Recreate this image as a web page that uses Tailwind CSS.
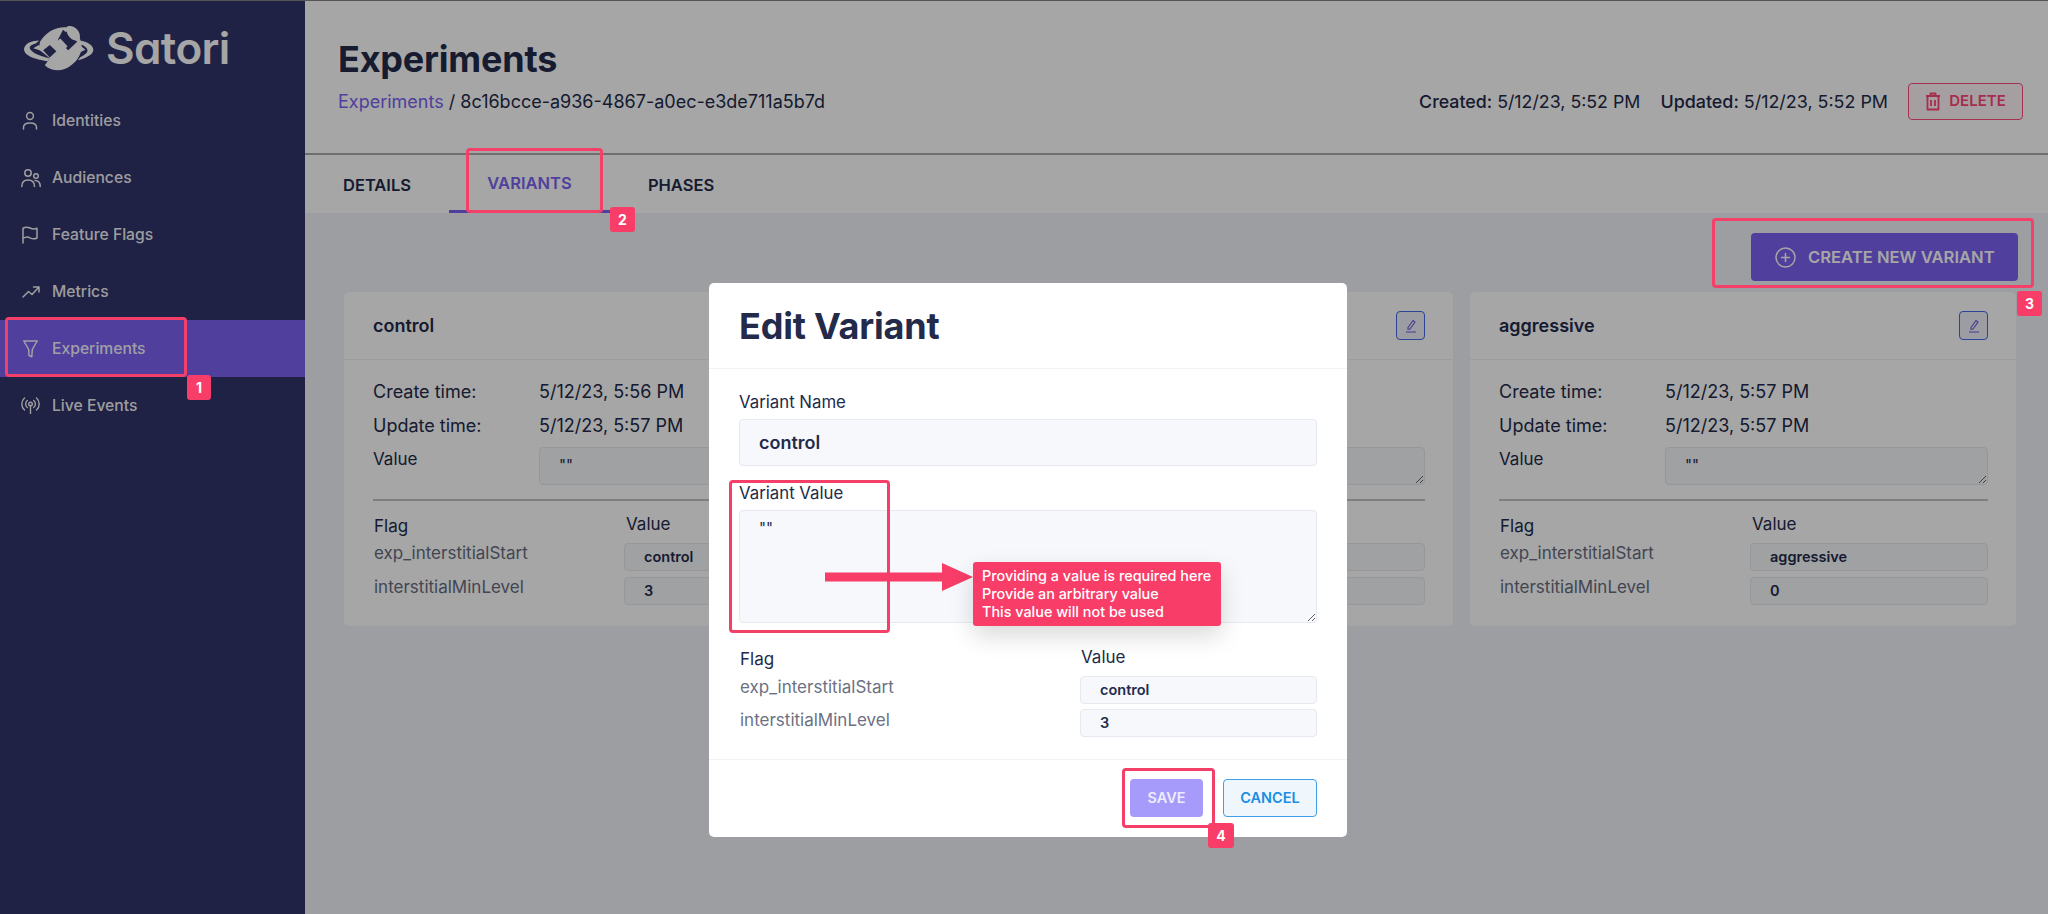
<!DOCTYPE html>
<html>
<head>
<meta charset="utf-8">
<script src="https://cdn.jsdelivr.net/npm/@tailwindcss/browser@4"></script>
</head>
<body class="m-0 font-['Inter',sans-serif]">
<div class="relative w-[2048px] h-[914px] overflow-hidden border-t border-[#555] flex text-[#232a4a]">

  <!-- Sidebar -->
  <aside class="w-[305px] shrink-0 bg-[#30336a] text-white">
    <div class="h-[91px] pl-[24px] pt-[24px] flex items-start gap-[12px]">
      <svg class="w-[70px] h-[46px]" viewBox="72 76 212 138" fill="#fff">
        <path d="M120 127C138 96 168 80 200 82 214 70 246 88 241 116 256 148 238 182 215 197 190 218 155 216 135 197L150 176 118 150Z"/>
        <path fill="#30336a" d="M130 152 150 136 170 155 150 174Z"/>
        <path fill="#30336a" d="M190 90 233 126 206 152 174 122Z"/>
        <path d="M176 118C190 108 200 100 204 90L222 106C216 120 206 132 192 142Z" fill="#30336a"/>
        <path d="M162 132 182 116 204 140 184 162 170 148Z"/>
        <ellipse cx="220" cy="101" rx="15" ry="24" transform="rotate(-38 220 101)"/>
        <path d="M72 148C75 130 95 122 118 122L108 131C92 135 85 142 92 150 100 160 120 170 150 176L143 185C110 180 72 170 72 148Z"/>
        <path d="M100 146 118 135 124 153Z"/>
        <path d="M240 122C265 125 282 138 282 150 282 165 260 175 235 182L243 172C258 165 266 157 264 150 262 142 250 135 235 132Z"/>
        <path d="M240 135 258 150 235 162Z"/>
      </svg>
      <span class="text-[44px] leading-[46px] font-semibold tracking-[-0.6px] [font-feature-settings:'cv11']">Satori</span>
    </div>
    <nav class="text-[15.700px] font-medium text-white/95">
      <a class="h-[57px] flex items-center pl-[22px] gap-[14px]">
        <svg class="w-[16px] h-[20px]" viewBox="0 0 16 20" fill="none" stroke="currentColor" stroke-width="1.5" stroke-linecap="round"><circle cx="8" cy="5" r="3.4"/><path d="M1.5 18v-1.5C1.5 13.5 4 12 8 12s6.500 1.500 6.500 4.500V18"/></svg>
        <span>Identities</span>
      </a>
      <a class="h-[57px] flex items-center pl-[21px] gap-[11px]">
        <svg class="w-[20px] h-[20px]" viewBox="0 0 20 20" fill="none" stroke="currentColor" stroke-width="1.5" stroke-linecap="round"><circle cx="7" cy="5" r="3.200"/><circle cx="15" cy="8" r="2.300"/><path d="M.8 18.500C.8 14.500 3 12 7 12s6.500 2.500 6.500 6.500M14 12.500c3 0 5.200 2 5.200 6"/></svg>
        <span>Audiences</span>
      </a>
      <a class="h-[57px] flex items-center pl-[22px] gap-[14px]">
        <svg class="w-[16px] h-[18px]" viewBox="0 0 16 18" fill="none" stroke="currentColor" stroke-width="1.5" stroke-linecap="round" stroke-linejoin="round"><path d="M1 17V2.200C4 .5 6 1 8 2s4.500 1.500 7 .3V12c-2.500 1.200-5 .8-7-.2S3.500 10.800 1 12.500"/></svg>
        <span>Feature Flags</span>
      </a>
      <a class="h-[57px] flex items-center pl-[22px] gap-[12px]">
        <svg class="w-[18px] h-[12px]" viewBox="0 0 18 12" fill="none" stroke="currentColor" stroke-width="1.5" stroke-linecap="round" stroke-linejoin="round"><path d="M1 11 6.500 5.500 10 8.500 16.500 1.500M11.500 1H17v5"/></svg>
        <span>Metrics</span>
      </a>
      <a class="h-[57px] flex items-center pl-[23px] gap-[14px] bg-[#7b62f0]">
        <svg class="w-[15px] h-[18px]" viewBox="0 0 15 18" fill="none" stroke="currentColor" stroke-width="1.500" stroke-linejoin="round"><path d="M.8 1h13.400L9.300 9.500 8.800 16.800 6 15.500 5.700 9.500Z"/></svg>
        <span>Experiments</span>
      </a>
      <a class="h-[57px] flex items-center pl-[20px] gap-[11px]">
        <svg class="w-[21px] h-[17px]" viewBox="0 0 21 17" fill="none" stroke="currentColor" stroke-width="1.400" stroke-linecap="round"><circle cx="10.500" cy="7" r="1.800"/><path d="M10.500 9v7.500M7.300 10.500a4.500 4.500 0 0 1 0-7M13.700 3.500a4.500 4.500 0 0 1 0 7M4.500 13a8 8 0 0 1 0-12M16.500 1a8 8 0 0 1 0 12"/></svg>
        <span>Live Events</span>
      </a>
    </nav>
  </aside>

  <!-- Main -->
  <main class="flex-1 flex flex-col bg-[#f1f3f7]">
    <header class="h-[154px] shrink-0 bg-white border-b-2 border-[#aaa] flex justify-between pl-[33px] pr-[25px]">
      <div class="pt-[36px]">
        <h1 class="text-[36px] leading-[44px] font-bold tracking-[-0.2px]">Experiments</h1>
        <p class="mt-[9px] text-[18px] leading-[24px]"><span class="text-[#7b62f0]">Experiments</span> / 8c16bcce-a936-4867-a0ec-e3de711a5b7d</p>
      </div>
      <div class="pt-[82px] flex items-start">
        <span class="text-[17.8px] leading-[37px]"><span class="font-medium">Created:</span> 5/12/23, 5:52 PM</span>
        <span class="ml-[20px] text-[17.9px] leading-[37px]"><span class="font-medium">Updated:</span> 5/12/23, 5:52 PM</span>
        <button class="ml-[20px] w-[115px] h-[37px] rounded-[4px] border border-[#fb4f7c] bg-[#fff5f8] text-[#ff4677] text-[15px] font-semibold flex items-center justify-center gap-[8px]">
          <svg class="w-[16px] h-[19px]" viewBox="0 0 16 19" fill="none" stroke="currentColor" stroke-width="1.800" stroke-linejoin="round"><path d="M1 4h14M5.500 4V1.500h5V4M2.500 4v13.500h11V4M6 8v6M10 8v6"/></svg>
          DELETE
        </button>
      </div>
    </header>
    <div class="h-[58px] shrink-0 bg-white flex text-[16.500px] font-semibold">
      <a class="w-[144px] pt-[2px] flex items-center justify-center">DETAILS</a>
      <a class="w-[161px] pt-[2px] flex items-center justify-center text-[#7b62f0] border-b-[3px] border-[#7b62f0]">VARIANTS</a>
      <a class="w-[142px] pt-[2px] flex items-center justify-center">PHASES</a>
    </div>
    <section class="flex-1 pl-[39px] pr-[30px] pt-[20px]">
      <div class="flex justify-end">
        <button class="w-[267px] h-[48px] rounded-[4px] bg-[#7b62f0] text-white text-[16.600px] font-semibold flex items-center pl-[24px] gap-[12px]">
          <svg class="w-[21px] h-[21px]" viewBox="0 0 21 21" fill="none" stroke="currentColor" stroke-width="1.500" stroke-linecap="round"><circle cx="10.500" cy="10.500" r="9.500"/><path d="M10.500 6.500v8M6.500 10.500h8"/></svg>
          CREATE NEW VARIANT
        </button>
      </div>
      <div class="mt-[11px] grid grid-cols-[546px_546px_546px] gap-[17px]">

        <article class="h-[334px] bg-white rounded-[5px]">
          <div class="h-[68px] border-b border-[#eef0f3] flex items-center justify-between pl-[29px] pr-[28px]">
            <h3 class="text-[18px] font-semibold">control</h3>
            <span class="w-[29px] h-[29px] rounded-[4px] border-[1.500px] border-[#4467e8] bg-[#eef1fb] flex items-center justify-center text-[#6f5ad8]"><svg class="w-[12px] h-[14px]" viewBox="0 0 12 14" fill="none" stroke="currentColor" stroke-width="1.100"><path d="M3 8.500 8 1.500l2 1.500-5 7-2 .3ZM1 13h10"/></svg></span>
          </div>
          <div class="pl-[29px] pr-[28px] pt-[15px] text-[17px]">
            <div class="flex text-[18px] leading-[34px]"><span class="w-[166px]">Create time:</span><span>5/12/23, 5:56 PM</span></div>
            <div class="flex text-[18px] leading-[34px]"><span class="w-[166px]">Update time:</span><span>5/12/23, 5:57 PM</span></div>
            <div class="flex leading-[32px]"><span class="w-[166px] shrink-0">Value</span><textarea readonly class="flex-1 mt-[4px] h-[38px] rounded-[4px] border border-[#e6e9ef] bg-[#f6f8fb] pl-[19px] pt-[7px] text-[15px] leading-[20px]">""</textarea></div>
            <div class="mt-[14px] h-[2px] bg-[#c4c4c4]"></div>
            <div class="grid grid-cols-[251px_1fr]">
              <div class="h-[42px] pl-[1px] pt-[13px] leading-[24px]">Flag</div>
              <div class="h-[42px] pl-[2px] pt-[11px] leading-[24px]">Value</div>
              <div class="pl-[1px] text-[17px] leading-[20px] text-[#666c80]">exp_interstitialStart</div>
              <div class="h-[28px] rounded-[4px] border border-[#e6e9ef] bg-[#f6f8fb] pl-[19px] text-[14.500px] leading-[26px] font-semibold">control</div>
              <div class="mt-[6px] pl-[1px] text-[17px] leading-[20px] text-[#666c80]">interstitialMinLevel</div>
              <div class="mt-[6px] h-[28px] rounded-[4px] border border-[#e6e9ef] bg-[#f6f8fb] pl-[19px] text-[14.500px] leading-[26px] font-semibold">3</div>
            </div>
          </div>
        </article>

        <!-- Middle card: only its right edge shows beside the modal -->
        <article class="h-[334px] bg-white rounded-[5px]">
          <div class="h-[68px] border-b border-[#eef0f3] flex items-center justify-end pl-[29px] pr-[28px]">
            <span class="w-[29px] h-[29px] rounded-[4px] border-[1.500px] border-[#4467e8] bg-[#eef1fb] flex items-center justify-center text-[#6f5ad8]"><svg class="w-[12px] h-[14px]" viewBox="0 0 12 14" fill="none" stroke="currentColor" stroke-width="1.100"><path d="M3 8.500 8 1.500l2 1.500-5 7-2 .3ZM1 13h10"/></svg></span>
          </div>
          <div class="pl-[29px] pr-[28px] pt-[15px]">
            <div class="h-[68px]"></div>
            <div class="flex"><span class="w-[166px] shrink-0"></span><textarea readonly class="flex-1 mt-[4px] h-[38px] rounded-[4px] border border-[#e6e9ef] bg-[#f6f8fb]"></textarea></div>
            <div class="mt-[14px] h-[2px] bg-[#c4c4c4]"></div>
            <div class="grid grid-cols-[251px_1fr]">
              <div class="h-[42px] col-span-2"></div>
              <div></div>
              <div class="h-[28px] rounded-[4px] border border-[#e6e9ef] bg-[#f6f8fb]"></div>
              <div class="mt-[6px]"></div>
              <div class="mt-[6px] h-[28px] rounded-[4px] border border-[#e6e9ef] bg-[#f6f8fb]"></div>
            </div>
          </div>
        </article>

        <article class="h-[334px] bg-white rounded-[5px]">
          <div class="h-[68px] border-b border-[#eef0f3] flex items-center justify-between pl-[29px] pr-[28px]">
            <h3 class="text-[18px] font-semibold">aggressive</h3>
            <span class="w-[29px] h-[29px] rounded-[4px] border-[1.500px] border-[#4467e8] bg-[#eef1fb] flex items-center justify-center text-[#6f5ad8]"><svg class="w-[12px] h-[14px]" viewBox="0 0 12 14" fill="none" stroke="currentColor" stroke-width="1.100"><path d="M3 8.500 8 1.500l2 1.500-5 7-2 .3ZM1 13h10"/></svg></span>
          </div>
          <div class="pl-[29px] pr-[28px] pt-[15px] text-[17px]">
            <div class="flex text-[18px] leading-[34px]"><span class="w-[166px]">Create time:</span><span>5/12/23, 5:57 PM</span></div>
            <div class="flex text-[18px] leading-[34px]"><span class="w-[166px]">Update time:</span><span>5/12/23, 5:57 PM</span></div>
            <div class="flex leading-[32px]"><span class="w-[166px] shrink-0">Value</span><textarea readonly class="flex-1 mt-[4px] h-[38px] rounded-[4px] border border-[#e6e9ef] bg-[#f6f8fb] pl-[19px] pt-[7px] text-[15px] leading-[20px]">""</textarea></div>
            <div class="mt-[14px] h-[2px] bg-[#c4c4c4]"></div>
            <div class="grid grid-cols-[251px_1fr]">
              <div class="h-[42px] pl-[1px] pt-[13px] leading-[24px]">Flag</div>
              <div class="h-[42px] pl-[2px] pt-[11px] leading-[24px]">Value</div>
              <div class="pl-[1px] text-[17px] leading-[20px] text-[#666c80]">exp_interstitialStart</div>
              <div class="h-[28px] rounded-[4px] border border-[#e6e9ef] bg-[#f6f8fb] pl-[19px] text-[14.500px] leading-[26px] font-semibold">aggressive</div>
              <div class="mt-[6px] pl-[1px] text-[17px] leading-[20px] text-[#666c80]">interstitialMinLevel</div>
              <div class="mt-[6px] h-[28px] rounded-[4px] border border-[#e6e9ef] bg-[#f6f8fb] pl-[19px] text-[14.500px] leading-[26px] font-semibold">0</div>
            </div>
          </div>
        </article>
      </div>
    </section>
  </main>

  <!-- Dim overlay -->
  <div class="absolute inset-0 bg-black/35"></div>

  <!-- Modal -->
  <div class="absolute left-[709px] top-[282px] w-[638px] h-[554px] bg-white rounded-[5px] flex flex-col">
    <div class="h-[86px] shrink-0 border-b border-[#f0f2f5] pl-[30px] flex items-center">
      <h2 class="text-[36px] leading-[44px] font-bold tracking-[-0.2px]">Edit Variant</h2>
    </div>
    <div class="px-[30px] pt-[21px] text-[17px]">
      <label class="block leading-[24px] text-[16.800px]">Variant Name</label>
      <div class="mt-[5px] h-[47px] rounded-[4px] border border-[#e6e9ef] bg-[#f6f8fb] pl-[19px] text-[18px] leading-[45px] font-semibold">control</div>
      <label class="block mt-[15px] leading-[24px] text-[16.800px]">Variant Value</label>
      <textarea readonly class="block mt-[5px] w-full h-[113px] rounded-[4px] border border-[#e6e9ef] bg-[#f6f8fb] pl-[19px] pt-[7px] text-[15px] leading-[20px]">""</textarea>
      <div class="mt-[22px] grid grid-cols-[341px_1fr]">
        <div class="h-[31px] pl-[1px] pt-[2px] leading-[24px]">Flag</div>
        <div class="h-[31px] pl-[1px] leading-[24px]">Value</div>
        <div class="pl-[1px] pt-[1px] text-[17px] leading-[20px] text-[#6b7183]">exp_interstitialStart</div>
        <div class="h-[28px] rounded-[4px] border border-[#e6e9ef] bg-[#f6f8fb] pl-[19px] text-[14.500px] leading-[26px] font-semibold">control</div>
        <div class="mt-[5px] pl-[1px] pt-[1px] text-[17px] leading-[20px] text-[#6b7183]">interstitialMinLevel</div>
        <div class="mt-[5px] h-[28px] rounded-[4px] border border-[#e6e9ef] bg-[#f6f8fb] pl-[19px] text-[14.500px] leading-[26px] font-semibold">3</div>
      </div>
    </div>
    <div class="mt-auto h-[78px] border-t border-[#f0f2f5] pt-[19px] pr-[30px] flex justify-end gap-[20px] text-[14.500px] font-semibold">
      <button class="w-[73px] h-[38px] rounded-[4px] bg-[#a69bfb] text-[#eeecfd]">SAVE</button>
      <button class="w-[94px] h-[38px] rounded-[4px] border-[1.500px] border-[#3f9fe8] bg-[#eff6fc] text-[#1a8fe3]">CANCEL</button>
    </div>
  </div>

  <!-- Annotations -->
  <div class="absolute left-[5px] top-[316px] w-[182px] h-[60px] rounded-[4px] border-[3px] border-[#f43f68]"></div>
  <div class="absolute left-[187px] top-[374px] w-[24px] h-[25px] rounded-[3px] bg-[#f73d68] text-white text-[14px] font-bold flex items-center justify-center">1</div>
  <div class="absolute left-[466px] top-[147px] w-[137px] h-[65px] rounded-[4px] border-[3px] border-[#f43f68]"></div>
  <div class="absolute left-[610px] top-[206px] w-[25px] h-[25px] rounded-[3px] bg-[#f73d68] text-white text-[14px] font-bold flex items-center justify-center">2</div>
  <div class="absolute left-[1712px] top-[217px] w-[322px] h-[70px] rounded-[4px] border-[3px] border-[#f43f68]"></div>
  <div class="absolute left-[2017px] top-[290px] w-[25px] h-[25px] rounded-[3px] bg-[#f73d68] text-white text-[14px] font-bold flex items-center justify-center">3</div>
  <div class="absolute left-[729px] top-[479px] w-[161px] h-[153px] rounded-[4px] border-[3px] border-[#f43f68]"></div>
  <div class="absolute left-[825px] top-[562px] flex items-center">
    <svg class="w-[148px] h-[28px]" viewBox="0 0 148 28" fill="#f73d68"><path d="M0 9.500H117V0L148 14 117 28V18.500H0Z"/></svg>
  </div>
  <div class="absolute left-[973px] top-[561px] w-[248px] h-[64px] rounded-[3px] bg-[#f73d68] text-white text-[14.400px] font-medium leading-[18px] pl-[9px] pt-[5px] shadow-[0_10px_25px_rgba(0,0,0,0.15)]">
    <div>Providing a value is required here</div>
    <div>Provide an arbitrary value</div>
    <div>This value will not be used</div>
  </div>
  <div class="absolute left-[1122px] top-[767px] w-[93px] h-[60px] rounded-[4px] border-[3px] border-[#f43f68]"></div>
  <div class="absolute left-[1208px] top-[822px] w-[26px] h-[25px] rounded-[3px] bg-[#f73d68] text-white text-[14px] font-bold flex items-center justify-center">4</div>
</div>
</body>
</html>
